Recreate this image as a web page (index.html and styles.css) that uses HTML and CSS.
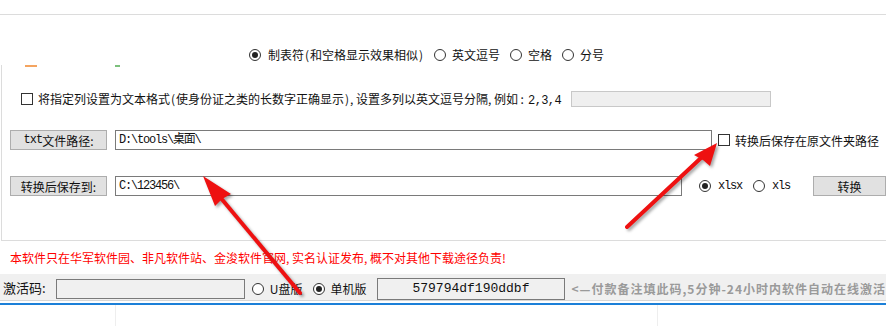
FILE: index.html
```html
<!DOCTYPE html>
<html>
<head>
<meta charset="utf-8">
<link rel="stylesheet" href="styles.css">
</head>
<body>
<div class="page">
  <div class="top"></div>
  <div class="fmt-row">
    <label class="opt"><span class="radio on"></span><span>制表符<span class="paren">(</span>和空格显示效果相似<span class="paren">)</span></span></label>
    <label class="opt"><span class="radio"></span>英文逗号</label>
    <label class="opt"><span class="radio"></span>空格</label>
    <label class="opt"><span class="radio"></span>分号</label>
  </div>
  <div class="group">
    <div class="marks"><span class="mark orange"></span><span class="mark green"></span></div>
    <div class="check-row">
      <span class="checkbox"></span>
      <span class="check-text">将指定列设置为文本格式<span class="paren">(</span>使身份证之类的长数字正确显示<span class="paren">)</span><span class="half">,</span>设置多列以英文逗号分隔<span class="half">,</span>例如<span class="colon">:</span><span class="mono nums">2,3,4</span></span>
      <span class="cols-input"></span>
    </div>
    <div class="path-row">
      <span class="btn label-btn"><span class="mono-s">txt</span>文件路径:</span>
      <span class="field field-long mono">D:\tools\桌面\</span>
      <span class="checkbox side-check"></span>
      <span class="side-text">转换后保存在原文件夹路径</span>
    </div>
    <div class="path-row save-row">
      <span class="btn label-btn">转换后保存到:</span>
      <span class="field field-short mono">C:\123456\</span>
      <label class="opt fmt"><span class="radio on"></span><span class="mono">xlsx</span></label>
      <label class="opt fmt"><span class="radio"></span><span class="mono">xls</span></label>
      <span class="btn go-btn">转换</span>
    </div>
  </div>
  <div class="notice">本软件只在华军软件园、非凡软件站、金浚软件官网<span class="half">,</span>实名认证发布<span class="half">,</span>概不对其他下载途径负责<span class="half">!</span></div>
  <div class="band">
    <span class="act-label">激活码:</span>
    <span class="act-input"></span>
    <label class="opt ver"><span class="radio"></span>U盘版</label>
    <label class="opt ver"><span class="radio on"></span>单机版</label>
    <span class="code">579794df190ddbf</span>
    <span class="hint">&lt;—付款备注填此码,5分钟-24小时内软件自动在线激活</span>
  </div>
  <div class="blue"></div>
  <div class="status">
    <span class="cell c1"></span>
    <span class="cell c2"></span>
  </div>
  <svg class="arrows" width="886" height="326" viewBox="0 0 886 326">
    <g class="arrow">
      <line x1="300" y1="293" x2="220" y2="197" stroke="#ee1111" stroke-width="4" stroke-linecap="round"/>
      <polygon points="203,176 231,194 222,199 215,206" fill="#ee1111"/>
    </g>
    <g class="arrow">
      <line x1="627" y1="227" x2="702" y2="157" stroke="#ee1111" stroke-width="4" stroke-linecap="round"/>
      <polygon points="717,143 710,166 703,160 694,155" fill="#ee1111"/>
    </g>
  </svg>
</div>
</body>
</html>
```

FILE: styles.css
```css
* { box-sizing: border-box; }
html, body { margin: 0; padding: 0; background: #fff; }
body {
  width: 886px;
  height: 326px;
  overflow: hidden;
  font-family: "Noto Sans CJK SC", "Noto Sans", sans-serif;
  font-size: 12px;
  color: #111;
}
.page { position: relative; width: 886px; height: 326px; }
.top { height: 15px; border-bottom: 1px solid #dcdcdc; }

.fmt-row {
  display: flex;
  align-items: center;
  gap: 10px;
  height: 12px;
  margin-top: 34px;
  margin-bottom: 4px;
  padding-left: 249px;
  line-height: 12px;
}
.opt { display: flex; align-items: center; gap: 6px; white-space: nowrap; line-height: 12px; }
.fmt-row .opt:first-child { gap: 7px; }
.paren { display: inline-block; width: 6px; text-align: center; }
.radio {
  flex: none;
  width: 12px; height: 12px;
  border: 1px solid #333;
  border-radius: 50%;
  background: #fff;
  position: relative;
}
.radio.on::after {
  content: "";
  position: absolute;
  left: 2px; top: 2px;
  width: 6px; height: 6px;
  border-radius: 50%;
  background: #222;
}
.checkbox {
  flex: none;
  width: 12px; height: 12px;
  border: 1px solid #333;
  background: #fff;
}

.group {
  margin-left: 1px;
  border-left: 1px solid #dcdcdc;
  border-bottom: 1px solid #dcdcdc;
  height: 176px;
}
.marks { height: 2px; display: flex; }
.mark { height: 2px; }
.mark.orange { width: 12px; margin-left: 23px; background: #f4a460; }
.mark.green { width: 5px; margin-left: 78px; background: #7cc07c; }

.check-row {
  display: flex;
  align-items: center;
  height: 16px;
  margin-top: 24px;
  padding-left: 19px;
}
.check-text { margin-left: 5px; white-space: nowrap; width: 533px; flex: none; }
.colon { display: inline-block; width: 8px; text-align: center; }
.mono {
  font-family: "Liberation Mono", "Noto Sans CJK SC", monospace;
  letter-spacing: -1.2px;
}
.mono-s { font-family: "Liberation Mono", monospace; letter-spacing: -1px; }
.check-text .nums { margin-left: 2px; letter-spacing: -0.6px; }
.cols-input {
  flex: none;
  width: 200px; height: 16px;
  border: 1px solid #c8c8c8;
  background: #efefef;
}

.path-row {
  display: flex;
  align-items: center;
  height: 20px;
  margin-top: 23px;
  padding-left: 8px;
}
.save-row { margin-top: 26px; }
.btn {
  display: flex;
  align-items: center;
  justify-content: center;
  height: 20px;
  background: #e1e1e1;
  border: 1px solid #adadad;
  white-space: nowrap;
}
.label-btn { width: 97px; }
.field {
  height: 20px;
  margin-left: 8px;
  border: 1px solid #7a7a7a;
  background: #fff;
  padding-left: 3px;
  line-height: 18px;
  white-space: nowrap;
}
.field-long { width: 597px; }
.field-short { width: 567px; }
.side-check { margin-left: 6px; }
.side-text { margin-left: 5px; white-space: nowrap; }
.fmt { margin-left: 17px; gap: 7px; }
.save-row .fmt + .fmt { margin-left: 11px; }
.go-btn { width: 73px; margin-left: 23px; }

.notice {
  height: 33px;
  line-height: 33px;
  padding-left: 10px;
  color: #ff0000;
  white-space: nowrap;
}
.half { display: inline-block; width: 6px; }

.band {
  display: flex;
  align-items: flex-start;
  height: 27px;
  background: #f0f0f0;
  border-bottom: 1px solid #d6d6d6;
  white-space: nowrap;
}
.act-label { font-size: 13px; margin-left: 3px; margin-top: 6px; line-height: 16px; width: 53px; }
.act-input {
  width: 189px; height: 20px;
  margin-top: 5px;
  border: 1px solid #7a7a7a;
  background: #f0f0f0;
}
.ver { margin-top: 9px; }
.band .ver:first-of-type { margin-left: 7px; }
.ver + .ver { margin-left: 10px; }
.code {
  width: 189px; height: 22px;
  margin-left: 10px;
  margin-top: 4px;
  border: 1px solid #7a7a7a;
  background: #f0f0f0;
  font-family: "Liberation Mono", monospace;
  font-size: 13px;
  text-align: center;
  line-height: 20px;
  color: #111;
}
.hint {
  margin-left: 6px;
  margin-top: 8px;
  line-height: 14px;
  color: #9a9a9a;
  font-weight: bold;
  letter-spacing: 1px;
}
.blue { height: 2px; margin-top: 2px; background: #1c80d8; }
.status { display: flex; height: 21px; }
.cell { height: 21px; border-right: 1px solid #eeeeee; }
.c1 { width: 116px; }
.c2 { width: 542px; }

.arrows { position: absolute; left: 0; top: 0; pointer-events: none; }
.arrow { filter: drop-shadow(2px 2px 1.5px rgba(0,0,0,0.35)); }
```
